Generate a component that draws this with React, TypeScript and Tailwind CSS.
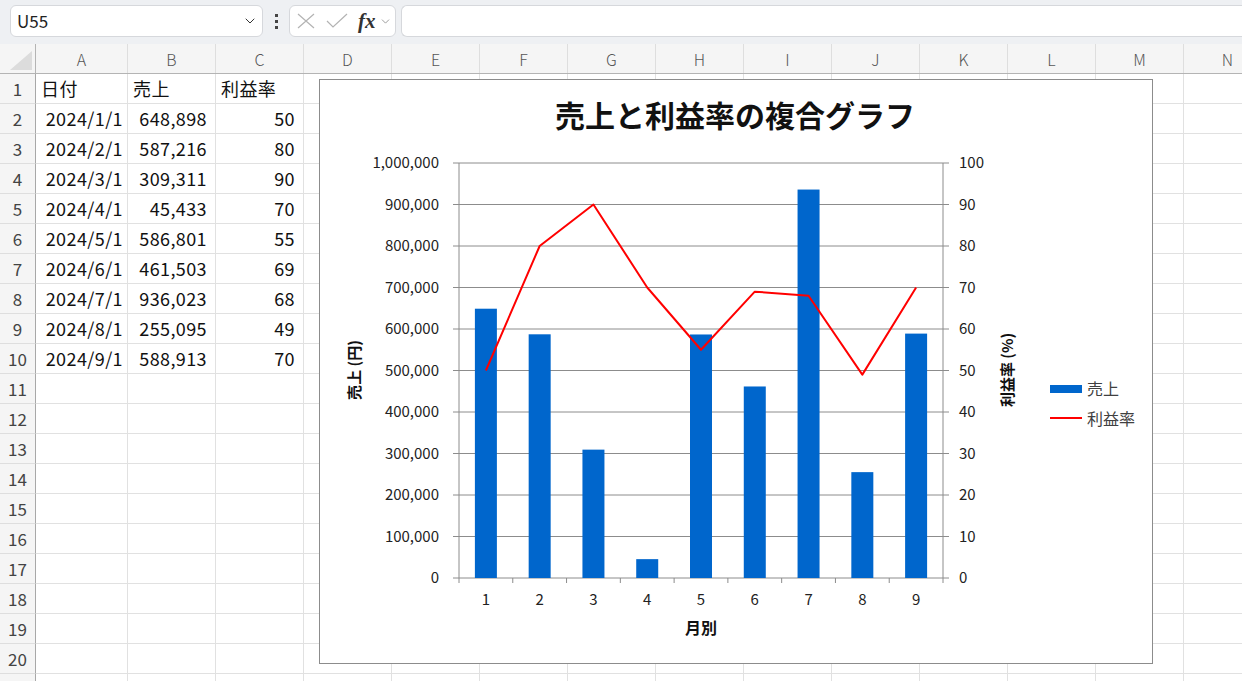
import { ChevronDown } from 'lucide-react';

const COLS = ['A', 'B', 'C', 'D', 'E', 'F', 'G', 'H', 'I', 'J', 'K', 'L', 'M', 'N'];

const DATA = [
  ['日付', '売上', '利益率'],
  ['2024/1/1', '648,898', '50'],
  ['2024/2/1', '587,216', '80'],
  ['2024/3/1', '309,311', '90'],
  ['2024/4/1', '45,433', '70'],
  ['2024/5/1', '586,801', '55'],
  ['2024/6/1', '461,503', '69'],
  ['2024/7/1', '936,023', '68'],
  ['2024/8/1', '255,095', '49'],
  ['2024/9/1', '588,913', '70'],
];

const SALES = [648898, 587216, 309311, 45433, 586801, 461503, 936023, 255095, 588913];
const RATE = [50, 80, 90, 70, 55, 69, 68, 49, 70];

// plot area, in chart-local coordinates
const L = 139;
const R = 623;
const T = 83;
const B = 498;
const H = B - T;
const STEP = (R - L) / 9;

function Chart() {
  const ticks = Array.from({ length: 11 }, (_, i) => i);
  const linePts = RATE.map((r, i) => `${L + (i + 0.5) * STEP},${B - (r / 100) * H}`).join(' ');

  return (
    <div className="absolute left-[319px] top-[35px] w-[834px] h-[585px] border border-[#8c8c8c] bg-white">
      <svg width="832" height="583" className="block" style={{ fontFamily: '"Noto Sans CJK JP", "Noto Sans", sans-serif' }}>
        <text x="415" y="47" textAnchor="middle" fontSize="30" fontWeight="700" fill="#111">
          売上と利益率の複合グラフ
        </text>

        {ticks.map((t) => {
          const y = B - (t / 10) * H;
          return (
            <g key={t}>
              <line x1={L - 6} x2={R + 6} y1={y} y2={y} stroke="#8c8c8c" strokeWidth="1" />
              <text x="119" y={y + 5} textAnchor="end" fontSize="15" fill="#222">
                {(t * 100000).toLocaleString('en-US')}
              </text>
              <text x="639" y={y + 5} fontSize="15" fill="#222">
                {t * 10}
              </text>
            </g>
          );
        })}
        <line x1={L} x2={L} y1={T} y2={B} stroke="#8c8c8c" />
        <line x1={R} x2={R} y1={T} y2={B} stroke="#8c8c8c" />
        {Array.from({ length: 10 }, (_, i) => (
          <line key={i} x1={L + i * STEP} x2={L + i * STEP} y1={B} y2={B + 5} stroke="#8c8c8c" />
        ))}

        {SALES.map((v, i) => {
          const h = (v / 1000000) * H;
          return <rect key={i} x={L + (i + 0.5) * STEP - 11} y={B - h} width="22" height={h} fill="#0066cc" />;
        })}
        <polyline points={linePts} fill="none" stroke="#ff0000" strokeWidth="2" strokeLinejoin="round" />

        {SALES.map((_, i) => (
          <text key={i} x={L + (i + 0.5) * STEP} y="525" textAnchor="middle" fontSize="15" fill="#222">
            {i + 1}
          </text>
        ))}
        <text x={(L + R) / 2} y="554" textAnchor="middle" fontSize="16" fontWeight="700" fill="#111">
          月別
        </text>
        <text transform="translate(40 290) rotate(-90)" textAnchor="middle" fontSize="15" fontWeight="700" fill="#111">
          売上 (円)
        </text>
        <text transform="translate(693 290) rotate(-90)" textAnchor="middle" fontSize="15" fontWeight="700" fill="#111">
          利益率 (%)
        </text>

        {/* legend */}
        <rect x="730" y="305" width="32" height="8" fill="#0066cc" />
        <text x="767" y="315" fontSize="16" fill="#404040">売上</text>
        <line x1="730" x2="762" y1="338" y2="338" stroke="#ff0000" strokeWidth="2" />
        <text x="767" y="345" fontSize="16" fill="#404040">利益率</text>
      </svg>
    </div>
  );
}

export default function App() {
  const rows = Array.from({ length: 21 }, (_, i) => i + 1);

  return (
    <div className="w-[1242px] h-[681px] overflow-hidden flex flex-col bg-white font-['Noto_Sans_CJK_JP','Noto_Sans',sans-serif]">
      {/* formula bar */}
      <div className="h-[44px] shrink-0 bg-[#eef0f3] flex items-start pt-[5px] pl-[10px] gap-[5px]">
        <div className="w-[253px] h-[32px] rounded-md bg-white border border-[#d6d8dc] flex items-center justify-between pl-[6px] pr-[4px]">
          <span className="text-[17px] text-[#222]">U55</span>
          <ChevronDown size={16} strokeWidth={1.5} className="text-[#333]" />
        </div>
        <div className="w-[16px] h-[32px] flex flex-col items-center justify-center gap-[3px]">
          <span className="w-[3px] h-[3px] bg-[#444]" />
          <span className="w-[3px] h-[3px] bg-[#444]" />
          <span className="w-[3px] h-[3px] bg-[#444]" />
        </div>
        <div className="w-[107px] h-[32px] rounded-md bg-white border border-[#d6d8dc] flex items-center pl-[7px]">
          <svg width="18" height="18" viewBox="0 0 18 18" className="shrink-0">
            <path d="M1 2 L17 16 M17 2 L1 16" stroke="#b3b3b3" strokeWidth="1.2" fill="none" />
          </svg>
          <svg width="22" height="18" viewBox="0 0 22 18" className="ml-[11px] shrink-0">
            <path d="M1 9 L7 15 L21 2" stroke="#b3b3b3" strokeWidth="1.2" fill="none" />
          </svg>
          <span className="ml-[10px] font-['Liberation_Serif',serif] italic font-bold text-[21px] text-[#333] leading-none">fx</span>
          <ChevronDown size={13} strokeWidth={1.5} className="ml-[3px] text-[#888]" />
        </div>
        <div className="flex-1 h-[32px] rounded-l-md bg-white border border-r-0 border-[#d6d8dc]" />
      </div>

      {/* sheet */}
      <div className="relative flex-1 overflow-hidden">
        <div className="flex h-[30px] bg-[#f5f5f5] border-b border-[#b4b4b4]">
          <div className="w-[36px] shrink-0 relative border-r border-[#b4b4b4]">
            <svg width="22" height="19" className="absolute right-[3px] bottom-[3px]">
              <polygon points="0,19 22,19 22,0" fill="#dcdcdc" />
            </svg>
          </div>
          {COLS.map((c) => (
            <div
              key={c}
              className={`${c === 'A' ? 'w-[92px]' : 'w-[88px]'} shrink-0 flex items-center justify-center border-r border-[#dedede] text-[16px] text-[#555] font-light`}
            >
              {c}
            </div>
          ))}
        </div>

        {rows.map((r) => {
          const d = DATA[r - 1];
          return (
            <div key={r} className="flex h-[30px]">
              <div className="w-[36px] shrink-0 bg-[#f5f5f5] border-r border-b border-r-[#a8a8a8] border-b-[#dedede] flex items-center justify-center text-[17px] text-[#444]">
                {r <= 20 ? r : ''}
              </div>
              {COLS.map((c, ci) => {
                const text = d && ci < 3 ? d[ci] : '';
                const head = r === 1;
                const align = head
                  ? 'justify-start pl-[5px]'
                  : ci === 0
                    ? 'justify-end pr-[4px]'
                    : 'justify-end pr-[8px]';
                return (
                  <div
                    key={c}
                    className={`${c === 'A' ? 'w-[92px]' : 'w-[88px]'} shrink-0 flex items-center ${align} border-r border-b border-[#e1e1e1] text-[18px] tracking-[0.4px] text-[#111] whitespace-nowrap overflow-hidden`}
                  >
                    {text}
                  </div>
                );
              })}
            </div>
          );
        })}

        <Chart />
      </div>
    </div>
  );
}
